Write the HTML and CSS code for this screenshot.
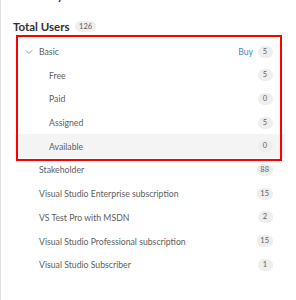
FILE: index.html
```html
<!DOCTYPE html>
<html lang="en">
<head>
  <meta charset="UTF-8">
  <meta name="viewport" content="width=device-width, initial-scale=1">
  <title>Users - Summary</title>
  <link rel="stylesheet" href="styles.css">
</head>
<body>
  <div class="panel">
    <h2 class="section-title">Summary</h2>

    <div class="total">
      <span class="total-label">Total Users</span>
      <span class="count">126</span>
    </div>

    <ul class="licenses">
      <!-- Basic group, expanded -->
      <li class="row group">
        <svg class="chevron" width="8" height="8" viewBox="0 0 8 8">
          <path d="M1 2.5 L4 5.5 L7 2.5" fill="none" stroke="#8a8886" stroke-width="0.9"/>
        </svg>
        <span class="name">Basic</span>
        <a class="buy" href="#">Buy</a>
        <span class="count">5</span>
      </li>
      <li class="row sub"><span class="name">Free</span><span class="count">5</span></li>
      <li class="row sub"><span class="name">Paid</span><span class="count">0</span></li>
      <li class="row sub"><span class="name">Assigned</span><span class="count">5</span></li>
      <li class="row sub selected"><span class="name">Available</span><span class="count">0</span></li>

      <li class="row"><span class="name">Stakeholder</span><span class="count">88</span></li>
      <li class="row"><span class="name">Visual Studio Enterprise subscription</span><span class="count">15</span></li>
      <li class="row"><span class="name">VS Test Pro with MSDN</span><span class="count">2</span></li>
      <li class="row"><span class="name">Visual Studio Professional subscription</span><span class="count">15</span></li>
      <li class="row"><span class="name">Visual Studio Subscriber</span><span class="count">1</span></li>
    </ul>

    <!-- annotation box drawn over the Basic group -->
    <div class="highlight"></div>
  </div>
</body>
</html>
```

FILE: styles.css
```css
body {
  margin: 0;
  background: #fff;
  font-family: 'Lato', 'Noto Sans', sans-serif;
  overflow: hidden;
}
.panel {
  position: relative;
  display: flow-root;
  height: 300px;
  border-left: 1px solid #e1dfdd;
  padding-left: 12px;
  box-sizing: border-box;
}
.section-title {
  margin: -10px 0 0;
  font-size: 12px;
  line-height: 12px;
  font-weight: 700;
  color: #323130;
}
.total {
  display: flex;
  align-items: center;
  height: 16px;
  margin-top: 16.5px;
}
.total-label {
  font-size: 11.5px;
  font-weight: 700;
  color: #323130;
  margin-right: 5.5px;
}
.total .count {
  height: 11px;
  line-height: 11px;
  padding: 0 4px;
}
.licenses {
  list-style: none;
  margin: 5.2px 11px 0 2px;
  padding: 0;
}
.row {
  display: flex;
  align-items: center;
  height: 23.7px;
  padding: 0 12.5px 0 24px;
  font-size: 8.7px;
  color: #605e5c;
}
.row.group {
  padding-left: 10px;
}
.row.sub {
  padding-left: 34px;
}
.row.selected {
  background: #f4f4f4;
}
.chevron {
  margin-right: 6px;
}
.name {
  flex: 1;
  white-space: nowrap;
}
.buy {
  color: #3f86c9;
  text-decoration: none;
  margin-right: 4.5px;
}
.count {
  min-width: 15px;
  height: 12px;
  line-height: 12px;
  padding: 0 3.5px;
  box-sizing: border-box;
  border-radius: 6px;
  background: #efeeed;
  color: #605e5c;
  font-size: 7.5px;
  text-align: center;
}
.highlight {
  position: absolute;
  left: 15px;
  top: 35px;
  width: 266px;
  height: 126px;
  border: 2px solid #f00;
  box-sizing: border-box;
  pointer-events: none;
}
```
